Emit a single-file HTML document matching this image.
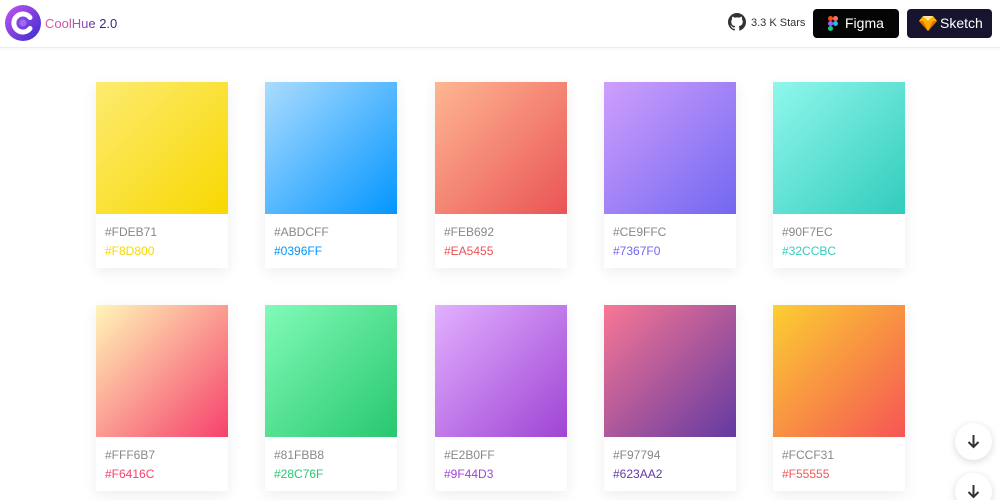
<!DOCTYPE html>
<html><head><meta charset="utf-8"><style>
*{margin:0;padding:0;box-sizing:border-box}
html,body{width:1000px;height:500px;overflow:hidden}
body{background:#fff;font-family:"Liberation Sans",sans-serif;position:relative}
.hdr{position:absolute;left:0;top:0;width:1000px;height:48px;background:#fff;border-bottom:1px solid #ececec;box-shadow:0 1px 3px rgba(0,0,0,.04)}
.ttl{position:absolute;left:45px;top:16px;font-size:13px;background:linear-gradient(90deg,#e0569a 0%,#b04fb0 50%,#2a2a8a 75%);-webkit-background-clip:text;color:transparent}
.stars{position:absolute;left:751px;top:17px;font-size:11px;color:#333}
.btn{position:absolute;top:9px;height:29px;border-radius:4px;color:#fff;font-size:14px;line-height:29px}
.card{position:absolute;width:132px;height:186px;background:#fff;box-shadow:0 4px 14px rgba(0,0,0,.07)}
.sq{width:132px;height:132px}
.c1{position:absolute;left:9px;top:11px;font-size:12px;color:#888}
.c1{top:143px}
.c2{position:absolute;left:9px;top:162px;font-size:12px}
.fab{position:absolute;left:955px;width:37px;height:37px;border-radius:50%;background:#fff;box-shadow:0 2px 8px rgba(0,0,0,.15)}
.fab svg{position:absolute;left:12px;top:11px}
</style></head><body>
<div class="hdr">
<svg style="position:absolute;left:5px;top:5px" width="36" height="36" viewBox="0 0 36 36"><defs><linearGradient id="g" x1="0" y1="0" x2="1" y2="1"><stop offset="0" stop-color="#c455f0"/><stop offset="1" stop-color="#3a2bd0"/></linearGradient></defs><circle cx="18" cy="18" r="18" fill="url(#g)"/><path d="M25 12.5A9 9 0 1 0 25 23.5" fill="none" stroke="#fff" stroke-width="5" stroke-linecap="round"/><circle cx="18" cy="18" r="3.5" fill="#9a6cf5"/></svg>
<div class="ttl">CoolHue 2.0</div>
<svg style="position:absolute;left:728px;top:13px" width="18" height="18" viewBox="0 0 16 16"><path fill="#333" d="M8 0C3.58 0 0 3.58 0 8c0 3.54 2.29 6.53 5.47 7.59.4.07.55-.17.55-.38v-1.33c-2.23.48-2.7-1.070-2.7-1.07-.36-.92-.89-1.17-.89-1.17-.73-.5.05-.49.05-.49.8.06 1.23.83 1.23.83.72 1.22 1.870.87 2.33.66.07-.52.28-.87.5-1.07-1.78-.2-3.64-.89-3.64-3.95 0-.87.31-1.59.82-2.15-.08-.2-.36-1.02.08-2.12 0 0 .67-.21 2.2.82a7.6 7.6 0 0 1 4 0c1.53-1.04 2.2-.82 2.2-.82.44 1.1.16 1.92.08 2.12.51.56.82 1.27.82 2.15 0 3.07-1.87 3.75-3.65 3.95.29.25.54.73.54 1.48v2.2c0 .21.15.46.55.38A8 8 0 0 0 16 8c0-4.42-3.58-8-8-8z"/></svg>
<div class="stars">3.3 K Stars</div>
<div class="btn" style="left:813px;width:86px;background:#050505">
<svg style="position:absolute;left:15px;top:7px" width="10" height="15" viewBox="0 0 10 15"><circle cx="2.5" cy="2.5" r="2.5" fill="#f24e1e"/><circle cx="7.5" cy="2.5" r="2.5" fill="#ff7262"/><circle cx="2.5" cy="7.5" r="2.5" fill="#a259ff"/><circle cx="7.5" cy="7.5" r="2.5" fill="#1abcfe"/><circle cx="2.5" cy="12.5" r="2.5" fill="#0acf83"/></svg>
<span style="position:absolute;left:32px">Figma</span></div>
<div class="btn" style="left:907px;width:85px;background:#17142f">
<svg style="position:absolute;left:12px;top:7px" width="18" height="15" viewBox="0 0 18 15"><path d="M4 0h10l4 5-9 10L0 5z" fill="#fdb300"/><path d="M0 5h18L9 15z" fill="#ea6c00"/><path d="M4 5h10L9 15z" fill="#fdad00"/><path d="M4 0h10L9 5z" fill="#fee5a0"/></svg>
<span style="position:absolute;left:33px">Sketch</span></div>
</div>

<div class="card" style="left:96px;top:82px"><div class="sq" style="background:linear-gradient(135deg,#FDEB71,#F8D800)"></div><div class="c1">#FDEB71</div><div class="c2" style="color:#F8D800">#F8D800</div></div>
<div class="card" style="left:265px;top:82px"><div class="sq" style="background:linear-gradient(135deg,#ABDCFF,#0396FF)"></div><div class="c1">#ABDCFF</div><div class="c2" style="color:#0396FF">#0396FF</div></div>
<div class="card" style="left:435px;top:82px"><div class="sq" style="background:linear-gradient(135deg,#FEB692,#EA5455)"></div><div class="c1">#FEB692</div><div class="c2" style="color:#EA5455">#EA5455</div></div>
<div class="card" style="left:604px;top:82px"><div class="sq" style="background:linear-gradient(135deg,#CE9FFC,#7367F0)"></div><div class="c1">#CE9FFC</div><div class="c2" style="color:#7367F0">#7367F0</div></div>
<div class="card" style="left:773px;top:82px"><div class="sq" style="background:linear-gradient(135deg,#90F7EC,#32CCBC)"></div><div class="c1">#90F7EC</div><div class="c2" style="color:#32CCBC">#32CCBC</div></div>

<div class="card" style="left:96px;top:305px"><div class="sq" style="background:linear-gradient(135deg,#FFF6B7,#F6416C)"></div><div class="c1">#FFF6B7</div><div class="c2" style="color:#F6416C">#F6416C</div></div>
<div class="card" style="left:265px;top:305px"><div class="sq" style="background:linear-gradient(135deg,#81FBB8,#28C76F)"></div><div class="c1">#81FBB8</div><div class="c2" style="color:#28C76F">#28C76F</div></div>
<div class="card" style="left:435px;top:305px"><div class="sq" style="background:linear-gradient(135deg,#E2B0FF,#9F44D3)"></div><div class="c1">#E2B0FF</div><div class="c2" style="color:#9F44D3">#9F44D3</div></div>
<div class="card" style="left:604px;top:305px"><div class="sq" style="background:linear-gradient(135deg,#F97794,#623AA2)"></div><div class="c1">#F97794</div><div class="c2" style="color:#623AA2">#623AA2</div></div>
<div class="card" style="left:773px;top:305px"><div class="sq" style="background:linear-gradient(135deg,#FCCF31,#F55555)"></div><div class="c1">#FCCF31</div><div class="c2" style="color:#F55555">#F55555</div></div>

<div class="fab" style="top:423px"><svg width="13" height="15" viewBox="0 0 13 15"><path d="M6.5 1v12M1.5 8l5 5 5-5" fill="none" stroke="#333" stroke-width="2"/></svg></div>
<div class="fab" style="top:473px"><svg width="13" height="15" viewBox="0 0 13 15"><path d="M6.5 1v12M1.5 8l5 5 5-5" fill="none" stroke="#333" stroke-width="2"/></svg></div>
</body></html>
